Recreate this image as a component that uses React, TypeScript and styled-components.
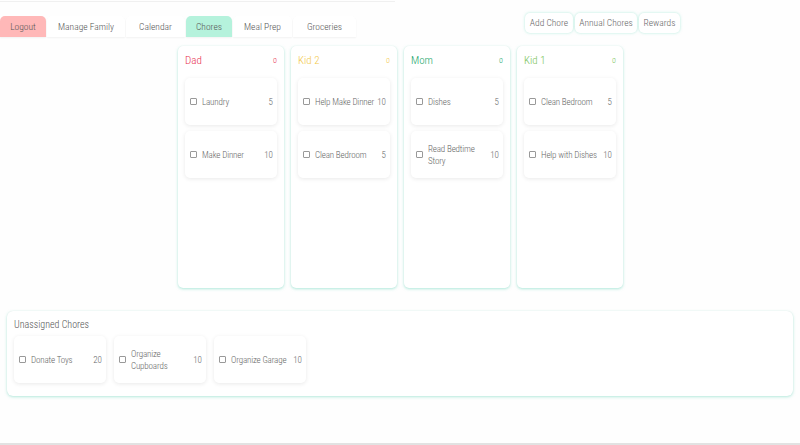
import React from "react";
import styled, { createGlobalStyle } from "styled-components";

const GlobalStyle = createGlobalStyle`
  body {
    margin: 0;
    background: #fefefe;
    font-family: "Roboto Condensed", "Liberation Sans Narrow", Lato, sans-serif;
    font-weight: 300;
    color: #666;
  }
`;

const Page = styled.div`
  position: relative;
  width: 800px;
  height: 445px;
  overflow: hidden;
  display: flex;
  flex-direction: column;
  border-bottom: 2px solid #e2e2e2;
  box-sizing: border-box;
`;

const TopRule = styled.div`
  width: 395px;
  height: 1px;
  margin-top: 1px;
  background: #f0f0f0;
`;

const NavRow = styled.div`
  display: flex;
  align-items: flex-start;
  margin-top: 11px;
`;

const Tabs = styled.div`
  display: flex;
  gap: 1px;
  margin-top: 3px;
`;

const Tab = styled.div<{ $bg?: string; $w: number }>`
  width: ${(p) => p.$w}px;
  height: 21px;
  line-height: 21px;
  text-align: center;
  font-size: 9.5px;
  color: #555;
  background: ${(p) => p.$bg || "#fff"};
  border-radius: 5px 5px 0 0;
  box-shadow: 0 1px 2px rgba(0, 0, 0, 0.05);
`;

const Actions = styled.div`
  display: flex;
  gap: 2px;
  margin-left: 169px;
`;

const ActionButton = styled.div<{ $w: number }>`
  width: ${(p) => p.$w}px;
  height: 20px;
  line-height: 20px;
  text-align: center;
  font-size: 9.5px;
  color: #666;
  background: #fff;
  border-radius: 5px;
  box-shadow: 0 0 3px rgba(120, 220, 195, 0.55);
`;

const Board = styled.div`
  display: flex;
  justify-content: center;
  gap: 7px;
  margin-top: 9px;
  padding-left: 1px;
`;

const Column = styled.div`
  width: 106px;
  height: 242px;
  box-sizing: border-box;
  padding: 5px 7px;
  background: #fff;
  border-radius: 5px;
  box-shadow: 0 1px 3px rgba(110, 215, 190, 0.55), 0 0 1px rgba(0, 0, 0, 0.06);
`;

const ColumnHeader = styled.div<{ $color: string }>`
  display: flex;
  justify-content: space-between;
  align-items: center;
  height: 18px;
  margin-bottom: 9px;
  color: ${(p) => p.$color};
  font-size: 11px;

  span:last-child {
    font-size: 8px;
  }
`;

const TaskList = styled.div`
  display: flex;
  flex-direction: column;
  gap: 6px;
`;

const TaskCard = styled.div`
  width: 92px;
  height: 47px;
  box-sizing: border-box;
  padding: 0 4px 0 5px;
  display: flex;
  align-items: center;
  background: #fff;
  border-radius: 5px;
  box-shadow: 0 1px 4px rgba(0, 0, 0, 0.09);
  font-size: 9px;
  color: #666;
`;

const Check = styled.span`
  flex: none;
  width: 5px;
  height: 5px;
  border: 1px solid #999;
  border-radius: 1px;
  margin-right: 5px;
`;

const TaskName = styled.span`
  flex: 1;
  min-width: 0;
  line-height: 12px;
  letter-spacing: -0.15px;
`;

const Points = styled.span`
  flex: none;
`;

const Unassigned = styled.div`
  margin: 23px 7px 0;
  height: 85px;
  box-sizing: border-box;
  padding: 8px 7px;
  background: #fff;
  border-radius: 6px;
  box-shadow: 0 1px 3px rgba(110, 215, 190, 0.5), 0 0 1px rgba(0, 0, 0, 0.08);
`;

const SectionTitle = styled.div`
  font-size: 10px;
  color: #555;
  margin-bottom: 6px;
`;

const UnassignedList = styled.div`
  display: flex;
  gap: 8px;
`;

type Chore = { name: string; points: number };
type Member = { name: string; color: string; chores: Chore[] };

const members: Member[] = [
  { name: "Dad", color: "#e8324f", chores: [{ name: "Laundry", points: 5 }, { name: "Make Dinner", points: 10 }] },
  { name: "Kid 2", color: "#f3c94a", chores: [{ name: "Help Make Dinner", points: 10 }, { name: "Clean Bedroom", points: 5 }] },
  { name: "Mom", color: "#1ea86d", chores: [{ name: "Dishes", points: 5 }, { name: "Read Bedtime Story", points: 10 }] },
  { name: "Kid 1", color: "#7cc45a", chores: [{ name: "Clean Bedroom", points: 5 }, { name: "Help with Dishes", points: 10 }] },
];

const unassigned: Chore[] = [
  { name: "Donate Toys", points: 20 },
  { name: "Organize Cupboards", points: 10 },
  { name: "Organize Garage", points: 10 },
];

const tabs = [
  { label: "Logout", w: 46, bg: "#ffb8b8" },
  { label: "Manage Family", w: 78 },
  { label: "Calendar", w: 59 },
  { label: "Chores", w: 46, bg: "#b5f2dc" },
  { label: "Meal Prep", w: 59 },
  { label: "Groceries", w: 63 },
];

const actions = [
  { label: "Add Chore", w: 48 },
  { label: "Annual Chores", w: 62 },
  { label: "Rewards", w: 41 },
];

const ChoreCard: React.FC<{ chore: Chore }> = ({ chore }) => (
  <TaskCard>
    <Check />
    <TaskName>{chore.name}</TaskName>
    <Points>{chore.points}</Points>
  </TaskCard>
);

const App: React.FC = () => {
  return (
    <Page>
      <GlobalStyle />
      <TopRule />
      <NavRow>
        <Tabs>
          {tabs.map((t) => (
            <Tab key={t.label} $w={t.w} $bg={t.bg}>
              {t.label}
            </Tab>
          ))}
        </Tabs>
        <Actions>
          {actions.map((a) => (
            <ActionButton key={a.label} $w={a.w}>
              {a.label}
            </ActionButton>
          ))}
        </Actions>
      </NavRow>

      <Board>
        {members.map((m) => (
          <Column key={m.name}>
            <ColumnHeader $color={m.color}>
              <span>{m.name}</span>
              <span>0</span>
            </ColumnHeader>
            <TaskList>
              {m.chores.map((c) => (
                <ChoreCard key={c.name} chore={c} />
              ))}
            </TaskList>
          </Column>
        ))}
      </Board>

      <Unassigned>
        <SectionTitle>Unassigned Chores</SectionTitle>
        <UnassignedList>
          {unassigned.map((c) => (
            <ChoreCard key={c.name} chore={c} />
          ))}
        </UnassignedList>
      </Unassigned>
    </Page>
  );
};

export default App;
